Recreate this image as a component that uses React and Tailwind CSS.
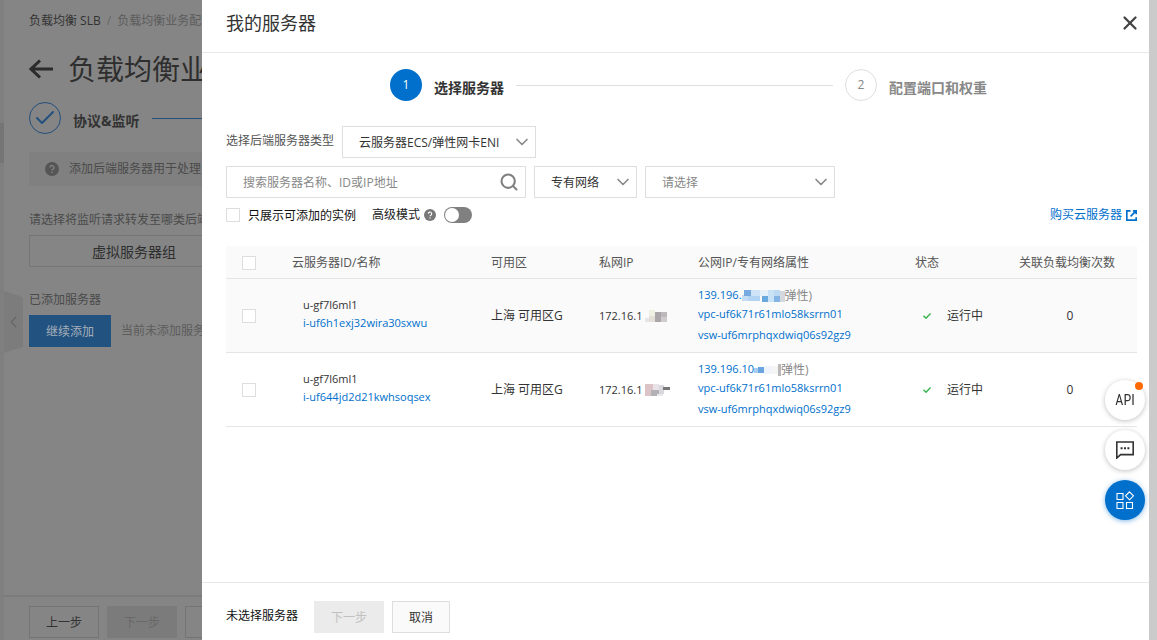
import { useState } from 'react';
import { Check, ChevronDown, ChevronLeft, Search, X } from 'lucide-react';

const steps = [
  { id: 1, title: '选择服务器' },
  { id: 2, title: '配置端口和权重' },
];

// x, y, w, h, fill for each pixelated patch
const servers = [
  {
    id: 'i-uf6h1exj32wira30sxwu',
    name: 'u-gf7l6ml1',
    zone: '上海 可用区G',
    privateIp: '172.16.1',
    privateMask: [
      [0, 8, 4, 4, '#e6e4e6'], [4, 0, 6, 6, '#eef0e2'], [4, 6, 6, 6, '#e3dfd8'],
      [10, 2, 6, 10, '#a9a5a9'], [16, 2, 6, 5, '#bcb8bc'], [16, 7, 6, 5, '#cfcbcd'],
    ],
    publicIp: '139.196.',
    publicMask: [
      [0, 5, 6, 6, '#c4dcf4'], [2, 0, 7, 6, '#76a9e0'], [6, 6, 12, 5, '#b3d3f2'],
      [9, 0, 9, 6, '#cfe3f6'], [18, 0, 8, 6, '#e6f0f8'], [20, 6, 6, 6, '#6aa9de'],
      [26, 0, 6, 12, '#c9e2f6'], [32, 0, 6, 6, '#bcd8f2'], [32, 6, 6, 6, '#84b4e4'],
      [38, 1, 5, 11, '#d4d8dc'],
    ],
    maskWidth: 43,
    vpc: 'vpc-uf6k71r61mlo58ksrrn01',
    vsw: 'vsw-uf6mrphqxdwiq06s92gz9',
    status: '运行中',
    slbCount: 0,
  },
  {
    id: 'i-uf644jd2d21kwhsoqsex',
    name: 'u-gf7l6ml1',
    zone: '上海 可用区G',
    privateIp: '172.16.1',
    privateMask: [
      [0, 0, 8, 12, '#dcc3c8'], [8, 0, 6, 6, '#e9e2e6'], [6, 6, 8, 6, '#b3b0b6'],
      [14, 1, 5, 9, '#d9d9dd'], [18, 3, 7, 3, '#77777a'], [12, 10, 6, 2, '#e8e8ea'],
    ],
    publicIp: '139.196.10',
    publicMask: [
      [0, 4, 4, 5, '#a9cdf0'], [4, 3, 6, 6, '#6aa5e2'], [10, 2, 7, 8, '#eef4fa'],
      [17, 2, 8, 8, '#f5f5f6'], [24, 0, 3, 12, '#b9b9b9'],
    ],
    maskWidth: 27,
    vpc: 'vpc-uf6k71r61mlo58ksrrn01',
    vsw: 'vsw-uf6mrphqxdwiq06s92gz9',
    status: '运行中',
    slbCount: 0,
  },
];

const Mosaic = ({ blocks, width }) => (
  <svg width={width} height="12" viewBox={`0 0 ${width} 12`} className="shrink-0" aria-hidden="true">
    {blocks.map(([x, y, w, h, fill], i) => (
      <rect key={i} x={x} y={y} width={w} height={h} fill={fill} />
    ))}
  </svg>
);

const HelpIcon = ({ className }) => (
  <svg viewBox="0 0 14 14" className={className} aria-hidden="true">
    <circle cx="7" cy="7" r="7" fill="currentColor" />
    <path d="M5 5.6a2 2 0 1 1 3 1.7c-.7.4-1 .7-1 1.3" fill="none" className="stroke-[var(--mark)]" strokeWidth="1.3" />
    <circle cx="7" cy="10.4" r=".8" className="fill-[var(--mark)]" />
  </svg>
);

const Checkbox = ({ id, label }) => (
  <input
    id={id}
    type="checkbox"
    aria-label={label}
    className="block h-[14px] w-[14px] shrink-0 appearance-none border border-[#dedede] bg-white checked:bg-[#0070cc]"
  />
);

const Select = ({ id, label, options, className, textClass }) => (
  <div className={`relative ${className}`}>
    <select
      id={id}
      aria-label={label}
      className={`h-8 w-full appearance-none border border-[#dedede] bg-white pl-4 pr-8 pt-0.5 outline-none ${textClass}`}
    >
      {options.map((option) => (
        <option key={option}>{option}</option>
      ))}
    </select>
    <ChevronDown className="pointer-events-none absolute right-1 top-1.5 h-5 w-5 text-[#888]" strokeWidth={2} />
  </div>
);

// Dimmed listener page behind the drawer
const ListenerPage = () => (
  <div className="relative flex w-[202px] shrink-0 overflow-hidden whitespace-nowrap bg-[#858585] text-[#4a4a4a]">
    <div className="w-1 shrink-0 bg-[#7f7f7f] pt-[123px]">
      <div className="h-10 bg-[#757575]" />
    </div>
    <button
      aria-label="收起"
      className="absolute left-1 top-[291px] flex h-[62px] w-[19px] items-center justify-center bg-[#7c7c7c] text-[#666] [clip-path:polygon(0_0,100%_10%,100%_90%,0_100%)]"
    >
      <ChevronLeft className="h-5 w-5" strokeWidth={1.5} />
    </button>
    <div className="flex min-w-0 flex-1 flex-col">
      <div className="flex-1 pl-[25px]">
        <nav className="flex h-[42px] items-center gap-1.5">
          <a href="#slb" className="text-[#333]">负载均衡 SLB</a>
          <span className="text-[#666]">/</span>
          <span className="text-[#5c5c5c]">负载均衡业务配</span>
        </nav>
        <div className="flex h-[54px] items-center gap-[15px]">
          <svg viewBox="0 0 24 20" className="h-5 w-6 shrink-0" fill="none" stroke="#2b2b2b" strokeWidth="3" aria-hidden="true">
            <path d="M24 10H2M11 1.500 2 10l9 8.500" />
          </svg>
          <h1 className="text-[28px] leading-10 text-[#2e2e2e]">负载均衡业</h1>
        </div>
        <div className="mt-1.5 flex h-8 items-center gap-3">
          <span className="flex h-8 w-8 shrink-0 items-center justify-center rounded-full border border-[#23507c] text-[#23507c]">
            <Check className="h-6 w-6" strokeWidth={2} />
          </span>
          <span className="pt-1.5 text-sm font-bold text-[#333]">协议&amp;监听</span>
          <span className="h-px flex-1 bg-[#23507c]" />
        </div>
        <div className="mt-[18px] flex h-[34px] items-center gap-2.5 bg-[#808080] pl-4">
          <HelpIcon className="h-[14px] w-[14px] shrink-0 text-[#555] [--mark:#858585]" />
          <span>添加后端服务器用于处理</span>
        </div>
        <p className="mt-[25px] leading-[18px]">请选择将监听请求转发至哪类后端</p>
        <button className="mt-1.5 h-8 w-[210px] border border-[#757575] pt-0.5 text-sm text-[#2e2e2e]">虚拟服务器组</button>
        <p className="mt-6 leading-[18px]">已添加服务器</p>
        <div className="mt-1.5 flex items-center gap-2.5">
          <button className="h-8 w-[82px] shrink-0 bg-[#22527f] pt-0.5 text-[#a6b0ba]">继续添加</button>
          <span className="text-[#5c5c5c]">当前未添加服务</span>
        </div>
      </div>
      <div className="flex h-[45px] items-start gap-2 border-t-2 border-[#7b7b7b] pl-[25px] pt-[9px]">
        <button className="h-8 w-[70px] shrink-0 border border-[#747474] pt-0.5 text-[#333]">上一步</button>
        <button disabled className="h-8 w-[70px] shrink-0 bg-[#7b7b7b] pt-0.5 text-[#686868]">下一步</button>
        <button aria-label="取消" className="h-8 w-[70px] shrink-0 border border-[#747474]" />
      </div>
    </div>
  </div>
);

const StepBar = ({ current }) => (
  <ol className="mt-4 flex items-center gap-3 pl-[188px] pr-[162px]">
    {steps.map((step, index) => (
      <li key={step.id} className={`flex items-center gap-3 ${index === 0 ? 'flex-1' : ''}`}>
        <span
          className={`flex h-8 w-8 shrink-0 items-center justify-center rounded-full ${
            step.id === current ? 'bg-[#0070cc] text-white' : 'border border-[#dedede] text-[#888]'
          }`}
        >
          {step.id}
        </span>
        <span className={`pt-1.5 text-sm font-bold ${step.id === current ? 'text-[#333]' : 'text-[#888]'}`}>
          {step.title}
        </span>
        {index === 0 && <span className="h-px flex-1 bg-[#dedede]" />}
      </li>
    ))}
  </ol>
);

const Filters = () => (
  <div className="pl-6 pr-3">
    <div className="mt-[25px] flex gap-2">
      <label htmlFor="server-type" className="pt-1.5 leading-[18px] text-[#555]">选择后端服务器类型</label>
      <Select
        id="server-type"
        options={['云服务器ECS/弹性网卡ENI']}
        className="w-[194px]"
        textClass="text-[#333]"
      />
    </div>
    <div className="mt-2 flex gap-2">
      <div className="relative w-[300px]">
        <input
          type="text"
          aria-label="搜索服务器"
          placeholder="搜索服务器名称、ID或IP地址"
          className="h-8 w-full border border-[#dedede] bg-white pl-4 pr-8 outline-none placeholder:text-[#888]"
        />
        <Search className="pointer-events-none absolute right-[7px] top-1.5 h-5 w-5 text-[#808080]" strokeWidth={2.5} />
      </div>
      <Select label="网络类型" options={['专有网络']} className="w-[103px]" textClass="text-[#333]" />
      <Select label="专有网络实例" options={['请选择']} className="w-[190px]" textClass="text-[#888]" />
    </div>
    <div className="mt-[7px] flex h-5 items-center">
      <Checkbox id="only-addable" />
      <label htmlFor="only-addable" className="pl-2 pt-0.5 text-[#111]">只展示可添加的实例</label>
      <label htmlFor="advanced" className="pl-4 text-[#222]">高级模式</label>
      <HelpIcon className="ml-1 h-3 w-3 text-[#777] [--mark:#ffffff]" />
      <span className="relative ml-2 h-4 w-7">
        <input
          id="advanced"
          type="checkbox"
          role="switch"
          className="peer block h-4 w-7 appearance-none rounded-full bg-[#808080] checked:bg-[#0070cc]"
        />
        <span className="pointer-events-none absolute left-px top-px h-[14px] w-[14px] rounded-full bg-white peer-checked:left-[13px]" />
      </span>
      <a href="#buy" className="ml-auto flex items-center gap-1 text-[#0070cc]">
        购买云服务器
        <svg viewBox="0 0 12 12" className="h-[11px] w-[11px]" fill="none" stroke="currentColor" strokeWidth="1.8" aria-hidden="true">
          <path d="M5 .9H.9v10.2h10.2V8M7.500.9h3.600V4.500M11 1 5 7" />
        </svg>
      </a>
    </div>
  </div>
);

const ServerTable = () => (
  <div className="mt-[21px] pl-6 pr-3">
    <table className="w-full table-fixed border-collapse text-left text-[#333]">
      <colgroup>
        <col className="w-[50px]" />
        <col className="w-[199px]" />
        <col className="w-[108px]" />
        <col className="w-[99px]" />
        <col className="w-[217px]" />
        <col className="w-[98px]" />
        <col />
      </colgroup>
      <thead>
        <tr className="h-8 border-b border-[#e5e5e5] bg-[#fafafa] text-[#555]">
          <th className="pl-4 pt-0.5"><Checkbox label="全选" /></th>
          <th className="pl-4 pt-0.5 font-normal">云服务器ID/名称</th>
          <th className="pl-4 pt-0.5 font-normal">可用区</th>
          <th className="pl-4 pt-0.5 font-normal">私网IP</th>
          <th className="pl-4 pt-0.5 font-normal">公网IP/专有网络属性</th>
          <th className="pl-4 pt-0.5 font-normal">状态</th>
          <th className="pt-0.5 text-center font-normal">关联负载均衡次数</th>
        </tr>
      </thead>
      <tbody>
        {servers.map((server, index) => (
          <tr key={server.id} className={`border-b border-[#e5e5e5] ${index === 0 ? 'bg-[#fafafa]' : 'bg-white'}`}>
            <td className="pl-4 pt-0.5"><Checkbox label={server.id} /></td>
            <td className="pb-0.5 pl-[27px] text-[11px] leading-[18px]">
              <div>{server.name}</div>
              <a href="#server" className="block text-[#0070cc]">{server.id}</a>
            </td>
            <td className="pl-4 pt-0.5">{server.zone}</td>
            <td className="pl-4 pt-0.5">
              <div className="flex items-center gap-0.5 text-[11px]">
                {server.privateIp}
                <Mosaic blocks={server.privateMask} width={25} />
              </div>
            </td>
            <td className="pb-1.5 pl-4 pt-2 text-[11px]">
              <div className="flex h-[18px] items-center">
                <a href="#ip" className="text-[#0070cc]">{server.publicIp}</a>
                <Mosaic blocks={server.publicMask} width={server.maskWidth} />
                <span className="text-xs text-[#888]">弹性)</span>
              </div>
              <a href="#vpc" className="block leading-[18px] text-[#0070cc]">{server.vpc}</a>
              <a href="#vsw" className="block leading-[23px] text-[#0070cc]">{server.vsw}</a>
            </td>
            <td className="pl-6 pt-0.5">
              <div className="flex items-center gap-4 whitespace-nowrap">
                <svg viewBox="0 0 8 8" className="h-2 w-2 shrink-0" fill="none" stroke="#35b34a" strokeWidth="1.5" aria-hidden="true">
                  <path d="M.5 3.8 3 6.2 7.6 1.4" />
                </svg>
                {server.status}
              </div>
            </td>
            <td className="pl-1.5 pt-0.5 text-center">{server.slbCount}</td>
          </tr>
        ))}
      </tbody>
    </table>
  </div>
);

const FloatingTools = () => (
  <div className="fixed bottom-[120px] right-3 flex flex-col gap-2.5">
    <button className="relative flex h-10 w-10 items-center justify-center rounded-full bg-white font-['Roboto_Condensed','DejaVu_Sans_Condensed',sans-serif] text-sm text-[#333] shadow-[0_1px_5px_rgba(0,0,0,0.25)]">
      API
      <span className="absolute right-0.5 top-0.5 h-2 w-2 rounded-full bg-[#ff6a00]" />
    </button>
    <button aria-label="咨询" className="flex h-10 w-10 items-center justify-center rounded-full bg-white text-[#333] shadow-[0_1px_5px_rgba(0,0,0,0.25)]">
      <svg viewBox="0 0 18 18" className="h-[18px] w-[18px]" fill="none" stroke="currentColor" strokeWidth="1.6">
        <path d="M.8 1h16.4v12.6H4.6L.8 17z" />
        <path d="M4.6 7.3h2M8 7.3h2M11.4 7.3h2" strokeWidth="2" />
      </svg>
    </button>
    <button aria-label="工具" className="flex h-10 w-10 items-center justify-center rounded-full bg-[#0070cc] text-white shadow-[0_1px_5px_rgba(0,112,204,0.5)]">
      <svg viewBox="0 0 18 18" className="h-[18px] w-[18px]" fill="none" stroke="currentColor" strokeWidth="1.1">
        <path d="M1 2.5h6v6H1zM1 11.5h6v6H1zM10.500 11.5h6v6h-6zM13.500.8l4 4-4 4-4-4z" />
      </svg>
    </button>
  </div>
);

const App = () => {
  const [step] = useState(1);

  return (
    <div className="flex min-h-screen font-['Open_Sans','Noto_Sans_CJK_SC',sans-serif] text-xs">
      <ListenerPage />
      <main className="flex min-w-0 flex-1 flex-col bg-white">
        <header className="flex h-[53px] items-center justify-between border-b border-[#e8e8e8] pb-1.5 pl-6 pr-2">
          <h2 className="text-lg leading-6 text-[#333]">我的服务器</h2>
          <button aria-label="关闭" className="text-[#444]">
            <X className="h-[22px] w-[22px]" strokeWidth={2.5} />
          </button>
        </header>
        <StepBar current={step} />
        <Filters />
        <ServerTable />
        <footer className="mt-auto flex h-[58px] items-start gap-2 border-t border-[#e8e8e8] pl-6 pt-[18px]">
          <span className="pr-2 pt-1.5 leading-[18px] text-[#111]">未选择服务器</span>
          <button disabled className="h-8 w-[70px] bg-[#ebebeb] pt-0.5 text-[#c1c1c1]">下一步</button>
          <button className="h-8 w-[58px] border border-[#dedede] bg-[#fafafa] pt-0.5 text-[#333]">取消</button>
        </footer>
      </main>
      <div className="w-2 shrink-0 bg-[#cbcbcb]" />
      <FloatingTools />
    </div>
  );
};

export default App;
